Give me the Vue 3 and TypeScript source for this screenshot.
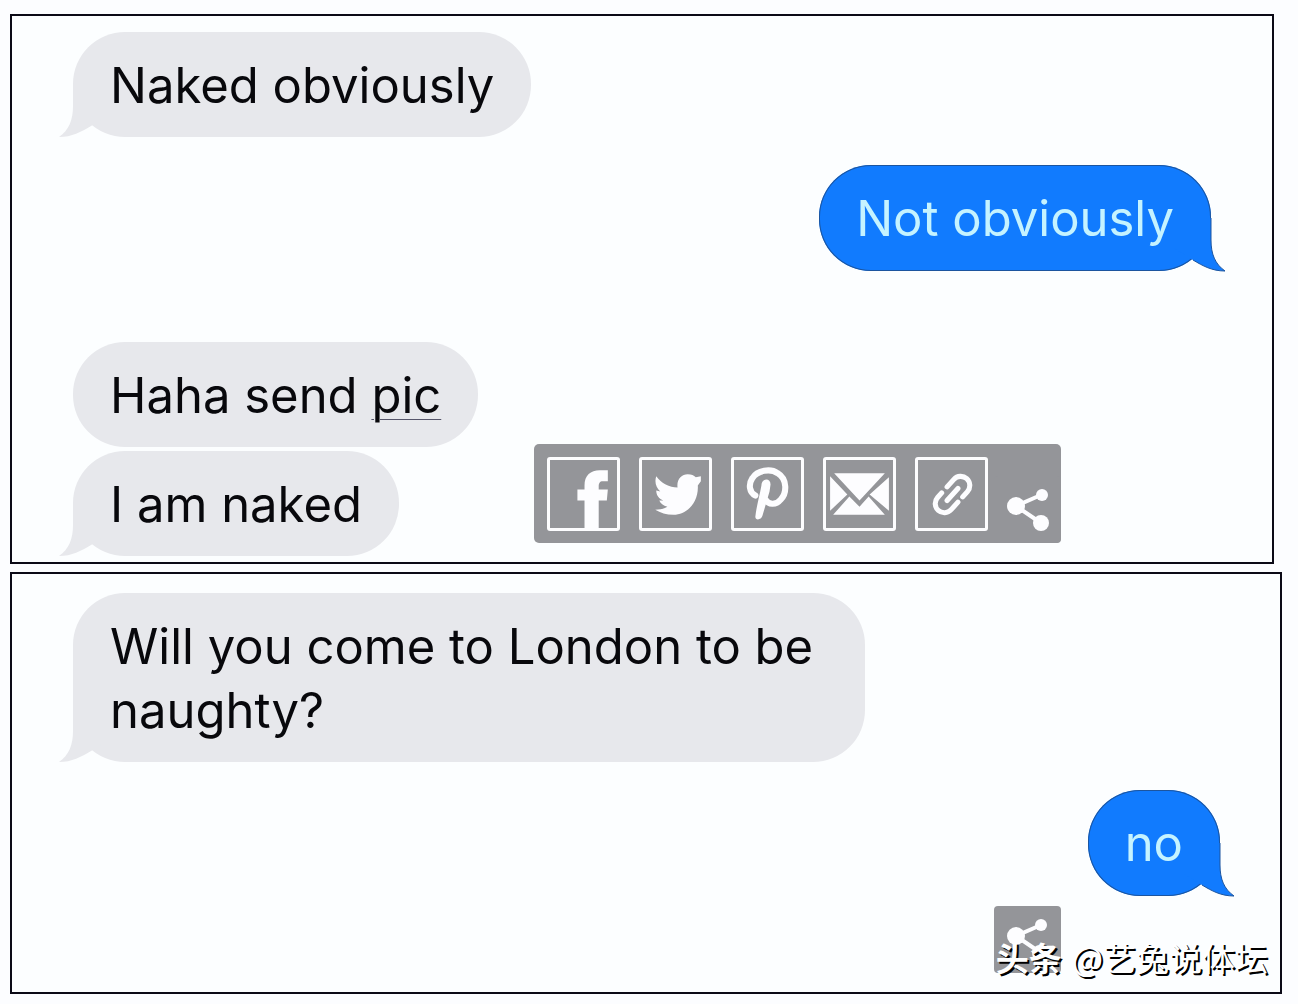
<script setup lang="ts">
interface Message {
  id: number
  text: string
  marked?: string
  side: 'in' | 'out'
  tail: boolean
}

const opening: Message[] = [
  { id: 1, text: 'Naked obviously', side: 'in', tail: true },
  { id: 2, text: 'Not obviously', side: 'out', tail: true },
]
const followUp: Message[] = [
  { id: 3, text: 'Haha send ', marked: 'pic', side: 'in', tail: false },
  { id: 4, text: 'I am naked', side: 'in', tail: true },
]
const closing: Message[] = [
  { id: 5, text: 'Will you come to London to be naughty?', side: 'in', tail: true },
  { id: 6, text: 'no', side: 'out', tail: true },
]
</script>

<template>
  <main class="page">
    <section class="panel first">
      <div v-for="m in opening" :key="m.id" class="bubble" :class="m.side">
        {{ m.text }}
        <svg class="tail" viewBox="0 0 50 54" aria-hidden="true">
          <path class="fill" d="M13 0V22C13 36 9 46 -1 53C12 53 21 48 31 42L50 30V0Z" />
          <path class="edge" d="M13 0V22C13 36 9 46 -1 53C12 53 21 48 31 42" />
        </svg>
      </div>
      <div class="row">
        <div class="stack">
          <div v-for="m in followUp" :key="m.id" class="bubble" :class="m.side">
            {{ m.text }}<span v-if="m.marked" class="marked">{{ m.marked }}</span>
            <svg v-if="m.tail" class="tail" viewBox="0 0 50 54" aria-hidden="true">
              <path class="fill" d="M13 0V22C13 36 9 46 -1 53C12 53 21 48 31 42L50 30V0Z" />
            </svg>
          </div>
        </div>
        <div class="share-bar">
          <button type="button" class="tile" aria-label="Facebook">
            <svg viewBox="0 0 72 72"><path d="M37 72V43H30V32H37V28C37 18 43 13 52 13H60V24H55C52 24 51 26 51 29V32H60L59 43H51V72Z" /></svg>
          </button>
          <button type="button" class="tile" aria-label="Twitter">
            <svg viewBox="0 0 72 72"><path d="M17 19C22 26 30 30 38 30C37 22 42 17 48 17C52 17 54 18 56 20L61 19V24L58 28C59 44 48 57 34 57C27 57 21 55 16 52C21 52 25 51 28 49C24 48 21 46 20 43H24C20 41 17 38 17 33L21 34C17 30 15 25 17 19Z" /></svg>
          </button>
          <button type="button" class="tile" aria-label="Pinterest">
            <svg viewBox="0 0 72 72"><path class="line" d="M24 38C18 35 17 27 21 21C26 13 39 11 46 16C56 22 55 36 49 42C44 48 37 47 34 42" stroke-width="6" /><path d="M30 28C30 21 39 20 39 27L38 34L31 58C30 62 24 63 24 59C25 49 28 39 30 28Z" /></svg>
          </button>
          <button type="button" class="tile" aria-label="Email">
            <svg viewBox="0 0 72 72"><path d="M11 16H61L36 43ZM7 19L24 37L7 53ZM65 20V53L46 37ZM26 39L36 49L45 39L61 57H10Z" /></svg>
          </button>
          <button type="button" class="tile" aria-label="Copy link">
            <svg viewBox="0 0 72 72"><g class="line" transform="rotate(-48 37 37)" stroke-width="5"><path d="M31 28H25A9 9 0 0 0 25 46H35M42 46H49A9 9 0 0 0 49 28H39M29 37H45" /></g></svg>
          </button>
          <button type="button" class="share" aria-label="Share">
            <svg viewBox="0 0 67 67"><path class="line" d="M47 19L22 30L47 47" stroke-width="4" /><circle cx="22" cy="30" r="9" /><circle cx="48" cy="19" r="6" /><circle cx="47" cy="47" r="8" /></svg>
          </button>
        </div>
      </div>
    </section>

    <section class="panel second">
      <div v-for="m in closing" :key="m.id" class="bubble" :class="m.side">
        {{ m.text }}
        <svg class="tail" viewBox="0 0 50 54" aria-hidden="true">
          <path class="fill" d="M13 0V22C13 36 9 46 -1 53C12 53 21 48 31 42L50 30V0Z" />
          <path class="edge" d="M13 0V22C13 36 9 46 -1 53C12 53 21 48 31 42" />
        </svg>
      </div>
      <button type="button" class="share alone" aria-label="Share">
        <svg viewBox="0 0 67 67"><path class="line" d="M47 19L22 30L47 47" stroke-width="4" /><circle cx="22" cy="30" r="9" /><circle cx="47" cy="19" r="6" /><circle cx="46" cy="47" r="8" /></svg>
      </button>
      <p class="credit"><b>头条</b><span>@艺兔说体坛</span></p>
    </section>
  </main>
</template>

<style>
body {
  margin: 0;
  background: #fcfdff;
}
</style>

<style scoped>
.page {
  display: flex;
  flex-direction: column;
  gap: 8px;
  padding: 14px 16px 10px 10px;
  font-family: Inter, "Liberation Sans", sans-serif;
}
.panel {
  position: relative;
  display: flex;
  flex-direction: column;
  align-items: flex-start;
  border: 2px solid #0b0a16;
  padding: 16px 61px 6px;
  background: #fcfeff;
}
.first {
  margin-right: 8px;
}
.second {
  padding: 19px 60px 19px 61px;
}
.bubble {
  position: relative;
  box-sizing: border-box;
  max-width: 792px;
  padding: 22px 37px 19px;
  border-radius: 52px;
  font-size: 49px;
  line-height: 64px;
  color: #08080c;
  background: #e7e8ec;
}
.out {
  align-self: flex-end;
  margin-top: 28px;
  padding-bottom: 20px;
  color: #c5f3ff;
  background: #117bfe;
  box-shadow: inset 0 0 0 1px #1c559f;
}
.marked {
  text-decoration: underline 1px #55556a;
  text-underline-offset: 6px;
}
.tail {
  position: absolute;
  left: -13px;
  bottom: -1px;
  width: 50px;
  height: 54px;
  overflow: visible;
}
.out .tail {
  left: auto;
  right: -13px;
  transform: scaleX(-1);
}
.fill {
  fill: #e7e8ec;
}
.out .fill {
  fill: #117bfe;
}
.edge {
  fill: none;
}
.out .edge {
  stroke: #1c559f;
}
.row {
  display: flex;
  align-self: stretch;
  justify-content: space-between;
  align-items: flex-end;
  margin-top: 71px;
}
.stack {
  display: flex;
  flex-direction: column;
  align-items: flex-start;
  gap: 4px;
}
.share-bar {
  display: flex;
  align-items: center;
  gap: 20px;
  margin: 0 150px 13px 0;
  padding-left: 13px;
  height: 99px;
  border-radius: 5px;
  background: #949599;
}
button {
  padding: 0;
  border: 0;
  background: none;
}
button svg {
  display: block;
  fill: #fdfdff;
}
.line {
  fill: none;
  stroke: #fdfdff;
  stroke-linecap: round;
  stroke-linejoin: round;
}
.tile {
  width: 73px;
  height: 74px;
  margin-right: -1px;
  border-radius: 3px;
  box-shadow: inset 0 0 0 3px #fdfdff;
}
.share {
  align-self: flex-end;
  width: 67px;
  height: 67px;
  margin-left: -13px;
  border-radius: 4px;
  background: #949599;
}
.alone {
  margin: 10px 159px 0 0;
}
.credit {
  position: absolute;
  right: 12px;
  bottom: 11px;
  display: flex;
  gap: 10px;
  margin: 0;
  font-family: "Noto Sans CJK SC", sans-serif;
  font-size: 33px;
  line-height: 48px;
  color: #fff;
  text-shadow: 2px 2px 0 #000;
}
</style>
